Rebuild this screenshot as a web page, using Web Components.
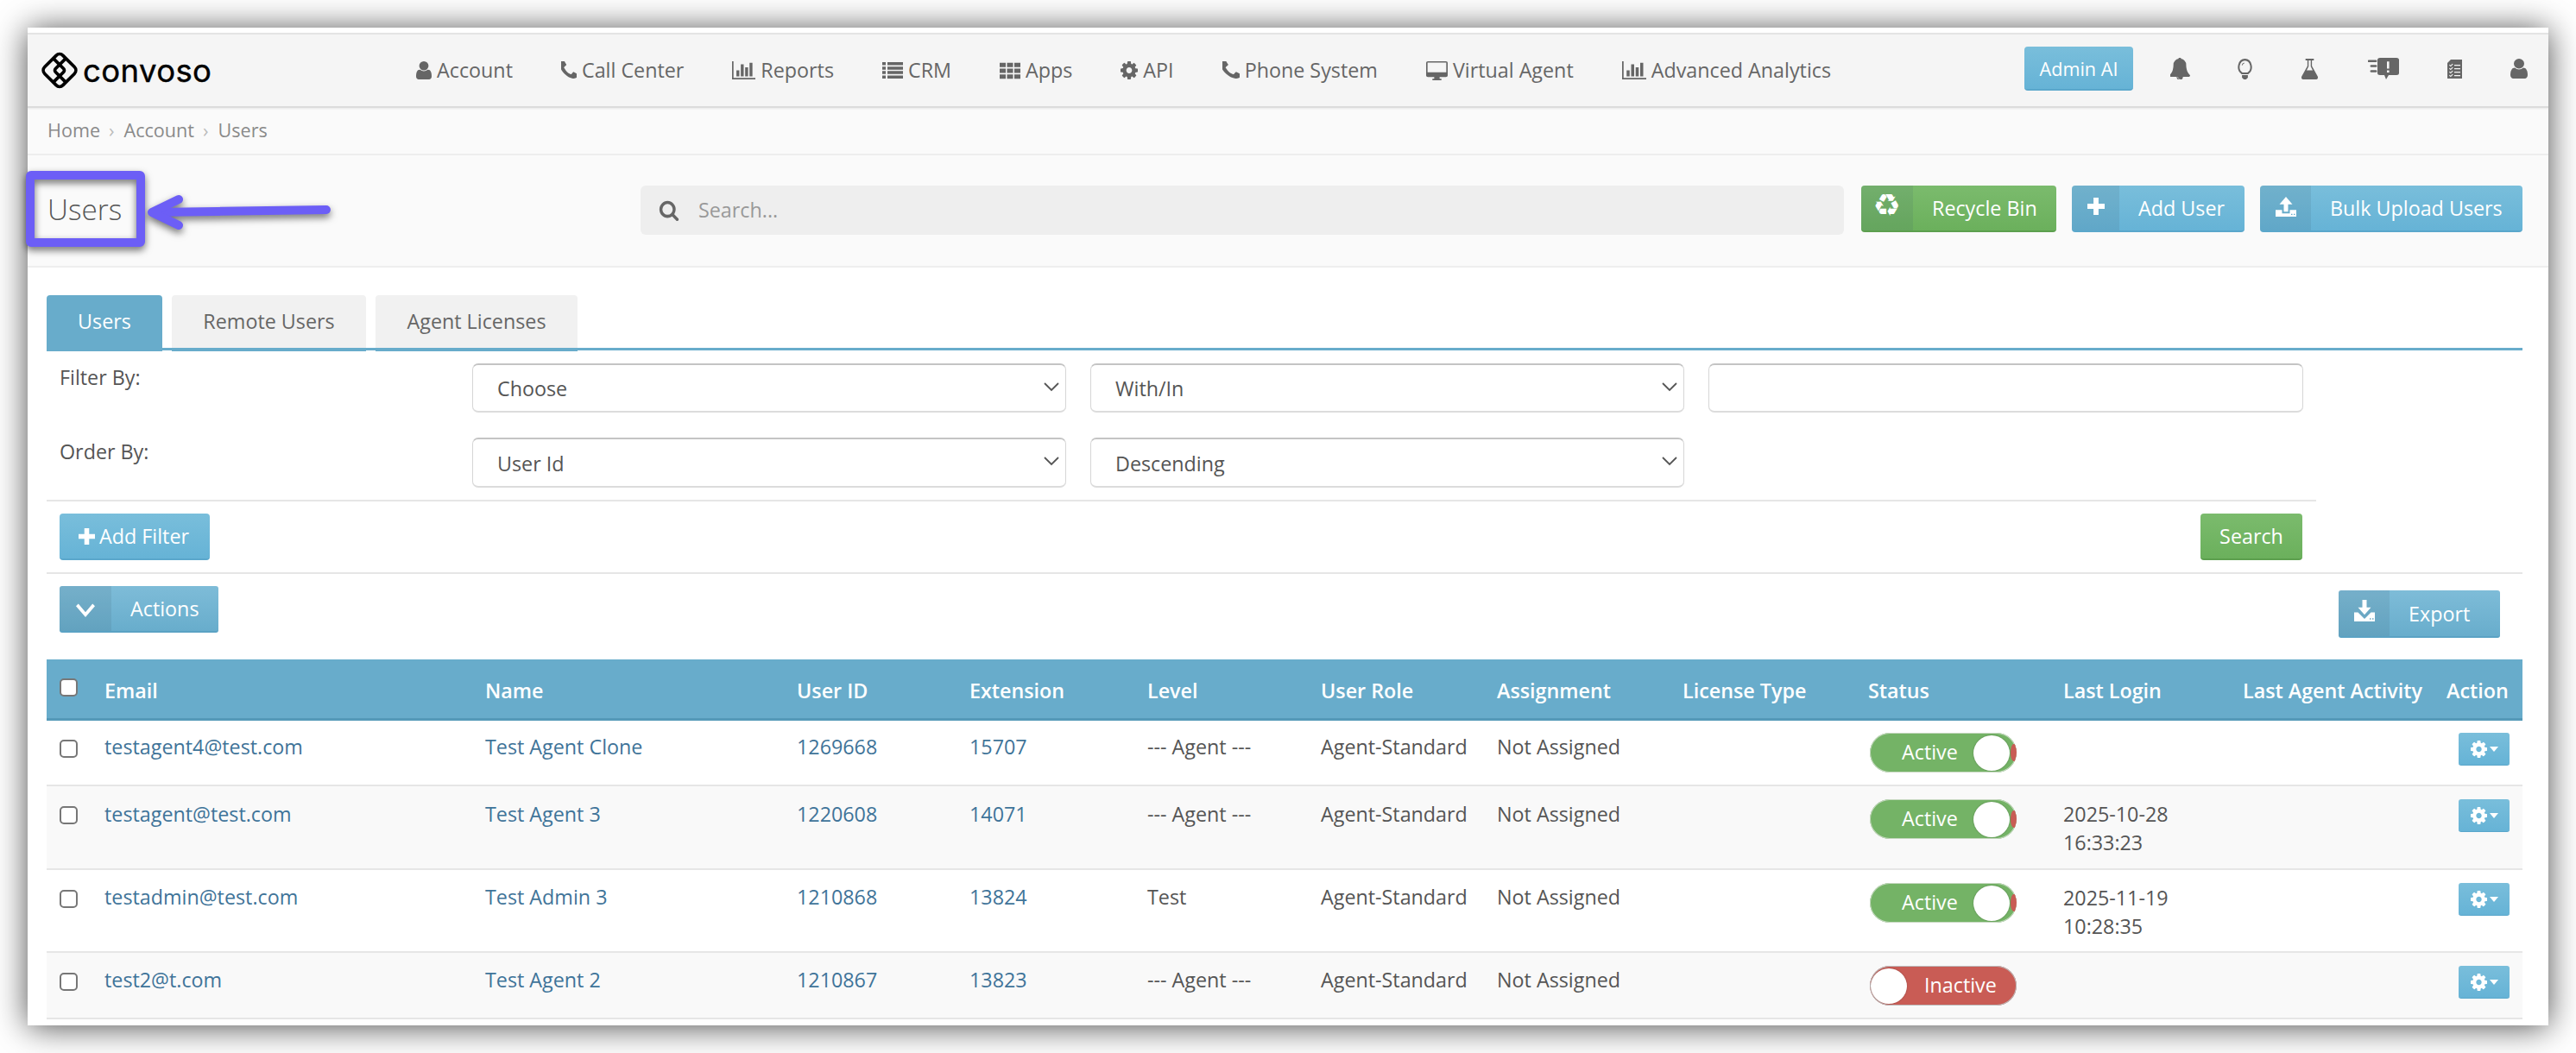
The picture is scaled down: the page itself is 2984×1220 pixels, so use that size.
<!DOCTYPE html>
<html>
<head>
<meta charset="utf-8">
<title>Users</title>
<style>
  html, body { margin: 0; height: 1220px; overflow: hidden; background: #fff; }
  body { font: 23.3px/33px "Open Sans", "Liberation Sans", sans-serif; color: #555; position: relative; }
</style>
</head>
<body>
<conv-window>
  <conv-navbar></conv-navbar>
  <conv-breadcrumb></conv-breadcrumb>
  <conv-page-header></conv-page-header>
  <conv-content>
    <conv-tabs></conv-tabs>
    <conv-filter></conv-filter>
    <conv-toolbar></conv-toolbar>
    <conv-user-table>
      <conv-user-row pad="14" ctl="0" h="76" email="testagent4@test.com" name="Test Agent Clone" uid="1269668" ext="15707" level="--- Agent ---"></conv-user-row>
      <conv-user-row pad="16" ctl="-1" h="97" alt email="testagent@test.com" name="Test Agent 3" uid="1220608" ext="14071" level="--- Agent ---" login="2025-10-28|16:33:23"></conv-user-row>
      <conv-user-row pad="15" ctl="0" h="96" email="testadmin@test.com" name="Test Admin 3" uid="1210868" ext="13824" level="Test" login="2025-11-19|10:28:35"></conv-user-row>
      <conv-user-row pad="15" ctl="0" h="77" alt inactive email="test2@t.com" name="Test Agent 2" uid="1210867" ext="13823" level="--- Agent ---"></conv-user-row>
    </conv-user-table>
  </conv-content>
</conv-window>
<conv-annotation></conv-annotation>

<script>
// iconos dibujados a mano o de la fuente original, todos con fill currentColor
const ICONS = {
  user: ['256 128 1280 1536', 'M1536 1399q0 109-62.5 187t-150.5 78h-854q-88 0-150.5-78t-62.5-187q0-85 8.5-160.5t31.5-152 58.5-131 94-89 134.5-34.5q131 128 313 128t313-128q76 0 134.5 34.5t94 89 58.5 131 31.5 152 8.5 160.5zm-256-887q0 159-112.5 271.5t-271.5 112.5-271.5-112.5-112.5-271.5 112.5-271.5 271.5-112.5 271.5 112.5 112.5 271.5z'],
  phone: ['300 200 1200 1400', 'M1600 1240q0 27-10 70.5t-21 68.5q-21 50-122 106-94 51-186 51-27 0-53-3.5t-57.5-12.5-47-14.5-55.5-20.5-49-18q-98-35-175-83-127-79-264-216t-216-264q-48-77-83-175-3-9-18-49t-20.5-55.5-14.5-47-12.5-57.5-3.5-53q0-92 51-186 56-101 106-122 25-11 68.5-21t70.5-10q14 0 21 3 18 6 53 76 11 19 30 54t35 63.5 31 53.5q3 4 17.5 25t21.5 35.5 7 28.5q0 20-28.5 50t-62 55-62 53-28.5 46q0 9 5 22.5t8.5 20.5 14 24 11.5 19q76 137 174 235t235 174q2 1 19 11.5t24 14 20.5 8.5 22.5 5q18 0 46-28.5t53-62 55-62 50-28.5q14 0 28.5 7t35.5 21.5 25 17.5q25 15 53.5 31t63.5 35 54 30q70 35 76 53 3 7 3 21z'],
  chart: ['0 128 2048 1536', 'M640 896v512h-256v-512h256zm384-512v1024h-256v-1024h256zm1024 1152v128h-2048v-1536h128v1408h1920zm-640-896v768h-256v-768h256zm384-384v1152h-256v-1152h256z'],
  list: ['0 0 24 22', 'M0 0h4v4H0zM6 0h18v4H6zM0 6h4v4H0zM6 6h18v4H6zM0 12h4v4H0zM6 12h18v4H6zM0 18h4v4H0zM6 18h18v4H6z'],
  th: ['0 0 24 24', 'M0 1h7v6H0zM8.5 1h7v6h-7zM17 1h7v6h-7zM0 9h7v6H0zM8.5 9h7v6h-7zM17 9h7v6h-7zM0 17h7v6H0zM8.5 17h7v6h-7zM17 17h7v6h-7z'],
  cog: ['128 128 1536 1536', 'M1152 896q0-106-75-181t-181-75-181 75-75 181 75 181 181 75 181-75 75-181zm512-109v222q0 12-8 23t-20 13l-185 28q-19 54-39 91 35 50 107 138 10 12 10 25t-9 23q-27 37-99 108t-94 71q-12 0-26-9l-138-108q-44 23-91 38-16 136-29 186-7 28-36 28h-222q-14 0-24.5-8.5t-11.5-21.5l-28-184q-49-16-90-37l-141 107q-10 9-25 9-14 0-25-11-126-114-165-168-7-10-7-23 0-12 8-23 15-21 51-66.5t54-70.5q-27-50-41-99l-183-27q-13-2-21-12.5t-8-23.5v-222q0-12 8-23t19-13l186-28q14-46 39-92-40-57-107-138-10-12-10-24 0-10 9-23 26-36 98.5-107.5t94.5-71.5q13 0 26 10l138 107q44-23 91-38 16-136 29-186 7-28 36-28h222q14 0 24.5 8.5t11.5 21.5l28 184q49 16 90 37l142-107q9-9 24-9 13 0 25 10 129 119 165 170 7 8 7 22 0 12-8 23-15 21-51 66.5t-54 70.5q26 50 41 98l183 28q13 2 21 12.5t8 23.5z'],
  desktop: ['0 0 24 24', 'M2 0h20a2 2 0 0 1 2 2v16a2 2 0 0 1-2 2h-7v2h2v2H7v-2h2v-2H2a2 2 0 0 1-2-2V2a2 2 0 0 1 2-2zM1.6 1.6V14h20.8V1.6z'],
  bell: ['128 64 1600 1664', 'M912 1696q0-16-16-16-59 0-101.5-42.5t-42.5-101.5q0-16-16-16t-16 16q0 73 51.5 124.5t124.5 51.5q16 0 16-16zm816-288q0 52-38 90t-90 38h-448q0 106-75 181t-181 75-181-75-75-181h-448q-52 0-90-38t-38-90q50-42 91-88t85-119.5 74.5-158.5 50-206 19.5-260q0-152 117-282.5t307-158.5q-8-19-8-39 0-40 28-68t68-28 68 28 28 68q0 20-8 39 190 28 307 158.5t117 282.5q0 139 19.5 260t50 206 74.5 158.5 85 119.5 91 88z'],
  bulb: ['2 0 20 24', 'M12 0a9.5 9.5 0 0 1 5 17.6V18H7v-.4A9.5 9.5 0 0 1 12 0zM12 2.2a7.3 7.3 0 0 0-3.4 13.7h6.8A7.3 7.3 0 0 0 12 2.2zM8 19h8v3l-2.5 2h-3L8 22zM11 4.5c-1.5.3-3 1.5-3.4 3l1 .3c.4-1.1 1.4-2 2.6-2.3z'],
  flask: ['0 0 24 24', 'M6.5 0h11v2H15v6.5l7.6 12c.9 1.6 0 3.5-2 3.5H3.400c-2 0-2.900-1.900-2-3.500l7.600-12V2H6.500zM10.600 2v7L8 13.600h8L13.400 9V2z'],
  alert: ['0 0 36 30', 'M1 3h8a1.500 1.500 0 0 1 0 3H1a1.500 1.500 0 0 1 0-3zM4 10h5a1.500 1.500 0 0 1 0 3H4a1.500 1.500 0 0 1 0-3zM4 17h5a1.500 1.500 0 0 1 0 3H4a1.500 1.500 0 0 1 0-3zM14 0h19a3 3 0 0 1 3 3v18a3 3 0 0 1-3 3H24l-3 6-2-6h-5a3 3 0 0 1-3-3V3a3 3 0 0 1 3-3zM22 5v10h2.600V5zM22 17.500V20.500h2.600V17.500z'],
  clipboard: ['0 0 17 22', 'M4 0h13v22H0V4zM8 6v1.200h7V6zM8 10v1.200h7V10zM8 14v1.200h7V14zM8 18v1.200h7V18zM2 6.500l.8-.8 1 1 2-2 .8.8-2.800 2.800zM2 10.500l.8-.8 1 1 2-2 .8.8-2.800 2.800zM2 14.500l.8-.8 1 1 2-2 .8.8-2.800 2.800zM2 18.500l.8-.8 1 1 2-2 .8.8-2.800 2.800z'],
  search: ['0 0 1792 1792', 'M1216 832q0-185-131.500-316.500t-316.500-131.500-316.500 131.500-131.500 316.500 131.500 316.500 316.500 131.500 316.500-131.500 131.500-316.500zm512 832q0 52-38 90t-90 38q-54 0-90-38l-343-342q-179 124-399 124-143 0-273.500-55.500t-225-150-150-225-55.500-273.500 55.500-273.500 150-225 225-150 273.500-55.500 273.500 55.500 225 150 150 225 55.500 273.500q0 220-124 399l343 343q37 37 37 90z'],
  plus: ['0 0 24 24', 'M8.500 0h7v8.500H24v7h-8.500V24h-7v-8.500H0v-7h8.500z'],
  upload: ['0 0 24 24', 'M12 0l7.500 9h-5v9h-5V9h-5zM0 16h7.500v4h9v-4H24v8H0zM18 20.500v1.500h1.500v-1.500zM21 20.500v1.500h1.500v-1.500z'],
  download: ['0 0 24 26', 'M9.500 0h5v9h5L12 18 4.500 9h5zM0 15h4.500L12 23l7.500-8H24v11H0zM18 22v1.600h1.500V22zM21 22v1.600h1.500V22z'],
  chevron: ['0 0 24 24', 'M3 6l-3 3 12 14L24 9l-3-3-9 10.500z'],
  caret: ['0 0 12 8', 'M0 0h12L6 8z']
};

function icon(name, w, h) {
  const [vb, d] = ICONS[name];
  return `<svg viewBox="${vb}" width="${w}" height="${h}" preserveAspectRatio="none" fill="currentColor" fill-rule="evenodd" style="display:block;flex:none"><path d="${d}"/></svg>`;
}

const BTN_BASE = `
  .btn { display:inline-flex; align-items:center; box-sizing:border-box; height:54px; color:#fff; border-radius:4px;
    border-bottom:2px solid #5aa7cb; background:linear-gradient(#79bedb,#66b3d6); overflow:hidden; font-size:23.3px; line-height:33px; white-space:nowrap; }
  .btn.green { background:linear-gradient(#7bbb6d,#6bb05c); border-bottom-color:#5c9f4e; }
  .pane { align-self:stretch; display:flex; align-items:center; justify-content:center; background:rgba(60,90,110,.13); flex:none; }
`;

class ConvWindow extends HTMLElement {
  constructor() {
    super();
    this.attachShadow({ mode: 'open' }).innerHTML = `
      <style>
        :host { display:block; box-sizing:border-box; width:2920px; height:1156px; margin:32px 0 0 32px; padding-top:6px;
          background:#fff; box-shadow:0 2px 36px rgba(0,0,0,.7); overflow:hidden; }
      </style><slot></slot>`;
  }
}

class ConvNavbar extends HTMLElement {
  constructor() {
    super();
    const items = [
      ['user', 18, 21, 'Account'], ['phone', 18, 21, 'Call Center'], ['chart', 27, 21, 'Reports'],
      ['list', 24, 19, 'CRM'], ['th', 24, 20, 'Apps'], ['cog', 20, 21, 'API'],
      ['phone', 20, 21, 'Phone System'], ['desktop', 25, 22, 'Virtual Agent'], ['chart', 28, 21, 'Advanced Analytics']
    ];
    this.attachShadow({ mode: 'open' }).innerHTML = `
      <style>
        :host { display:flex; align-items:center; box-sizing:border-box; height:87px; background:#f5f5f5; color:#666;
          border-top:2px solid #e4e4e4; border-bottom:2px solid #dcdcdc; box-shadow:0 1px 2px rgba(0,0,0,.08); position:relative; }
        .brand { display:flex; align-items:center; margin-left:15px; width:435px; flex:none; gap:5px; color:#000; }
        .brand span { font:400 36.500px/42px Inter, sans-serif; letter-spacing:.4px; -webkit-text-stroke:.4px #000; }
        nav { display:flex; gap:56px; }
        nav a { display:flex; align-items:center; gap:6px; white-space:nowrap; }
        .right { display:flex; align-items:center; position:absolute; left:2313px; top:14px; }
        ${BTN_BASE}
        .ai { width:126px; height:51px; justify-content:center; font-size:21.6px; padding-top:2px; }
        .tools { display:grid; grid-template-columns:repeat(6,auto); align-items:center; margin-left:0; }
        .tools div { display:flex; justify-content:center; }
      </style>
      <div class="brand">
        <svg width="44" height="43" viewBox="-23 -23 46 46" fill="none" stroke="#000" stroke-width="4">
          <g transform="rotate(45)">
            <rect x="-16" y="-16" width="32" height="32" rx="6"/>
            <path d="M-16 -5H2a3 3 0 0 1 3 3V16M16 5H-2a3 3 0 0 1-3-3V-16"/>
          </g>
        </svg>
        <span>convoso</span>
      </div>
      <nav>${items.map(i => `<a>${icon(i[0], i[1], i[2])}${i[3]}</a>`).join('')}</nav>
      <div class="right">
        <span class="btn ai">Admin AI</span>
        <div class="tools">
          <div style="width:109px">${icon('bell', 23, 25)}</div>
          <div style="width:41px">${icon('bulb', 17, 24)}</div>
          <div style="width:109px">${icon('flask', 21, 24)}</div>
          <div style="width:61px">${icon('alert', 36, 25)}</div>
          <div style="width:104px">${icon('clipboard', 17, 22)}</div>
          <div style="width:46px">${icon('user', 20, 23)}</div>
        </div>
      </div>`;
  }
}

class ConvBreadcrumb extends HTMLElement {
  constructor() {
    super();
    this.attachShadow({ mode: 'open' }).innerHTML = `
      <style>
        :host { display:flex; align-items:center; box-sizing:border-box; height:55px; padding:0 0 2px 23px; background:#fafafa;
          border-bottom:2px solid #eee; color:#8a8a8a; font-size:21.6px; }
        i { font-style:normal; margin:0 11px 0 10px; color:#bbb; }
      </style>
      Home<i>›</i>Account<i>›</i>Users`;
  }
}

class ConvPageHeader extends HTMLElement {
  constructor() {
    super();
    this.attachShadow({ mode: 'open' }).innerHTML = `
      <style>
        :host { display:flex; align-items:flex-start; box-sizing:border-box; height:130px; padding:35px 30px 0 22px; background:#fafafa;
          border-bottom:2px solid #eee; }
        h1 { margin:4px 0 0; padding-left:1px; box-sizing:border-box; width:688px; flex:none; font:300 33.300px/46px "Open Sans", sans-serif; color:#555; }
        .search { display:flex; align-items:center; box-sizing:border-box; width:1394px; height:57px; padding-left:21px; gap:22px; background:#eee; border-radius:6px; color:#666; flex:none; }
        input { border:0; outline:0; background:none; font:inherit; flex:1; padding:0; color:#555; }
        input::placeholder { color:#999; opacity:1; }
        .actions { display:flex; gap:18px; margin-left:20px; }
        .rec { font:36px/1 "DejaVu Sans", sans-serif; padding-bottom:6px; box-sizing:border-box; }
        ${BTN_BASE}
      </style>
      <h1>Users</h1>
      <div class="search">${icon('search', 24, 25)}<input placeholder="Search..."></div>
      <div class="actions">
        <span class="btn green" style="width:226px"><span class="pane rec" style="width:60px">&#9851;</span><span style="margin-left:22px">Recycle Bin</span></span>
        <span class="btn" style="width:200px"><span class="pane" style="width:55px;padding-bottom:4px;box-sizing:border-box">${icon('plus', 20, 20)}</span><span style="margin-left:22px">Add User</span></span>
        <span class="btn" style="width:304px"><span class="pane" style="width:59px;padding-bottom:4px;box-sizing:border-box">${icon('upload', 24, 23)}</span><span style="margin-left:22px">Bulk Upload Users</span></span>
      </div>`;
  }
}

class ConvContent extends HTMLElement {
  constructor() {
    super();
    this.attachShadow({ mode: 'open' }).innerHTML = `
      <style>:host { display:block; padding:32px 30px 0 22px; background:#fff; }</style><slot></slot>`;
  }
}

class ConvTabs extends HTMLElement {
  constructor() {
    super();
    this.attachShadow({ mode: 'open' }).innerHTML = `
      <style>
        :host { display:flex; gap:11px; border-bottom:3px solid #68accb; }
        a { display:flex; align-items:center; justify-content:center; box-sizing:border-box; height:65px; margin-bottom:-4px;
          border-radius:4px 4px 0 0; background:#f1f1f1; border-bottom:4px solid #68accb; color:#666; }
        a.on { background:#68accb; color:#fff; }
      </style>
      <a class="on" style="width:134px">Users</a>
      <a style="width:225px">Remote Users</a>
      <a style="width:234px">Agent Licenses</a>`;
  }
}

class ConvSelect extends HTMLElement {
  constructor() {
    super();
    this.attachShadow({ mode: 'open' }).innerHTML = `
      <style>
        :host { display:block; position:relative; height:57px; }
        select, input { display:block; box-sizing:border-box; width:100%; height:100%; margin:0; padding:2px 0 0 28px; appearance:none; -webkit-appearance:none;
          background:#fff; border:1px solid #d6d6d6; border-top:2px solid #c4c4c4; border-bottom:2px solid #dcdcdc; border-radius:7px; font:inherit; color:#555; outline:0; }
        svg { position:absolute; right:8px; top:21px; pointer-events:none; }
      </style>
      ${this.hasAttribute('blank') ? '<input>' :
        `<select><option>${this.getAttribute('value')}</option></select>
         <svg width="18" height="12" viewBox="0 0 18 12" fill="none" stroke="#555" stroke-width="1.800"><path d="M1 2l8 8 8-8"/></svg>`}`;
  }
}

class ConvFilter extends HTMLElement {
  constructor() {
    super();
    this.attachShadow({ mode: 'open' }).innerHTML = `
      <style>
        :host { display:block; width:2629px; }
        .grid { display:grid; grid-template-columns:450px 688px 688px 689px; column-gap:28px; row-gap:29px; box-sizing:border-box; padding:15px 0 14px 15px; border-bottom:2px solid #e6e6e6; }
        label { display:block; }
        .row { display:flex; justify-content:space-between; padding:14px 16px 0 15px; }
        ${BTN_BASE}
      </style>
      <div class="grid">
        <label>Filter By:</label>
        <conv-select value="Choose"></conv-select>
        <conv-select value="With/In"></conv-select>
        <conv-select blank></conv-select>
        <label>Order By:</label>
        <conv-select value="User Id" style="height:58px"></conv-select>
        <conv-select value="Descending" style="height:58px"></conv-select>
      </div>
      <div class="row">
        <span class="btn" style="width:174px;padding-left:22px;gap:5px">${icon('plus', 19, 19)}Add Filter</span>
        <span class="btn green" style="width:118px;justify-content:center">Search</span>
      </div>`;
  }
}

class ConvToolbar extends HTMLElement {
  constructor() {
    super();
    this.attachShadow({ mode: 'open' }).innerHTML = `
      <style>
        :host { display:flex; justify-content:space-between; align-items:flex-start; box-sizing:border-box; height:101px; margin-top:14px; padding:14px 26px 0 15px; border-top:2px solid #e6e6e6; }
        ${BTN_BASE}
        .flat { background:linear-gradient(#7ebcd8,#68adcc); border-radius:3px; border-bottom-color:#5aa2c4; }
        .export { margin-top:5px; height:55px; padding-top:2px; }
        .export .pane { margin-top:-2px; }
      </style>
      <span class="btn flat" style="width:184px"><span class="pane" style="width:60px">${icon('chevron', 22, 22)}</span><span style="margin-left:22px">Actions</span></span>
      <span class="btn flat export" style="width:187px"><span class="pane" style="width:59px;padding-bottom:6px;box-sizing:border-box">${icon('download', 24, 25)}</span><span style="margin-left:22px">Export</span></span>`;
  }
}

class ConvUserTable extends HTMLElement {
  constructor() {
    super();
    const heads = ['Email', 'Name', 'User ID', 'Extension', 'Level', 'User Role', 'Assignment', 'License Type', 'Status', 'Last Login', 'Last Agent Activity', 'Action'];
    this.attachShadow({ mode: 'open' }).innerHTML = `
      <style>
        :host { display:block; --cols:67px 441px 361px 200px 206px 201px 204px 215px 215px 226px 208px 236px 88px; }
        .head { display:grid; grid-template-columns:var(--cols); box-sizing:border-box; height:71px; padding-top:20px;
          background:#68accb; border-bottom:3px solid #5599b8; color:#fff; font-weight:600; white-space:nowrap; }
        input { appearance:none; -webkit-appearance:none; display:block; box-sizing:border-box; width:21px; height:21px; margin:2px 0 0 15px; background:#fff; border:2px solid #777; border-radius:5px; }
      </style>
      <div class="head"><div><input type="checkbox"></div>${heads.map(h => `<div>${h}</div>`).join('')}</div>
      <slot></slot>`;
  }
}

class ConvToggle extends HTMLElement {
  constructor() {
    super();
    const off = this.hasAttribute('off');
    this.attachShadow({ mode: 'open' }).innerHTML = `
      <style>
        :host { display:block; position:relative; box-sizing:border-box; width:170px; height:46px; border-radius:23px; overflow:hidden; color:#fff;
          background:${off ? '#c95c55' : '#74b366'}; box-shadow:inset 0 0 0 1px ${off ? '#bbb' : '#c6d8c0'}; }
        span { position:absolute; top:6px; left:${off ? '63px' : '37px'}; }
        .sliver { position:absolute; right:0; top:13px; width:7px; height:20px; background:#c95c55; border-radius:50% 0 0 50%; }
        .knob { position:absolute; top:3px; left:${off ? '1px' : '120px'}; width:42px; height:41px; border-radius:50%; background:#fff; box-shadow:0 0 2px rgba(0,0,0,.3); }
      </style>
      ${off ? '' : '<div class="sliver"></div>'}
      <span>${off ? 'Inactive' : 'Active'}</span><div class="knob"></div>`;
  }
}

class ConvUserRow extends HTMLElement {
  constructor() {
    super();
    const a = n => this.getAttribute(n) || '';
    const login = a('login').split('|').join('<br>');
    const ctl = Number(a('ctl'));
    this.attachShadow({ mode: 'open' }).innerHTML = `
      <style>
        :host { display:grid; grid-template-columns:var(--cols); box-sizing:border-box;
          height:${a('h')}px; padding-top:${a('pad')}px; border-bottom:2px solid #e6e6e6; background:${this.hasAttribute('alt') ? '#f9f9f9' : '#fff'}; white-space:nowrap; }
        a { color:#3f7499; }
        input { appearance:none; -webkit-appearance:none; display:block; box-sizing:border-box; width:21px; height:21px; margin:${8 + ctl}px 0 0 15px; background:#fff; border:2px solid #777; border-radius:5px; }
        conv-toggle { margin:${ctl}px 0 0 2px; }
        .login { margin-top:${ctl + 1}px; }
        .act { display:flex; align-items:center; justify-content:center; gap:3px; width:59px; height:38px; margin:${ctl}px 0 0 14px; border-radius:3px; color:#fff; background:linear-gradient(#79bedb,#66b3d6); border-bottom:1px solid #5aa7cb; box-sizing:border-box; }
      </style>
      <div><input type="checkbox"></div>
      <div><a>${a('email')}</a></div>
      <div><a>${a('name')}</a></div>
      <div><a>${a('uid')}</a></div>
      <div><a>${a('ext')}</a></div>
      <div>${a('level')}</div>
      <div>Agent-Standard</div>
      <div>Not Assigned</div>
      <div></div>
      <div><conv-toggle ${this.hasAttribute('inactive') ? 'off' : ''}></conv-toggle></div>
      <div class="login">${login}</div>
      <div></div>
      <div><span class="act">${icon('cog', 19, 20)}${icon('caret', 10, 6)}</span></div>`;
  }
}

// la anotacion morada va encima de la pagina, por eso es absolute
class ConvAnnotation extends HTMLElement {
  constructor() {
    super();
    this.attachShadow({ mode: 'open' }).innerHTML = `
      <style>
        :host { position:absolute; left:20px; top:190px; display:block; width:380px; height:110px; }
        svg { display:block; overflow:visible; filter:drop-shadow(0 4px 4px rgba(0,0,0,.55)); }
      </style>
      <svg width="380" height="110" viewBox="20 190 380 110" fill="none" stroke="#6c5ef6" stroke-width="10" stroke-linecap="round" stroke-linejoin="round">
        <rect x="35" y="203" width="128" height="78" rx="1"/>
        <path d="M178 246L378 243"/>
        <path d="M207 231L176 246L207 261"/>
      </svg>`;
  }
}

customElements.define('conv-window', ConvWindow);
customElements.define('conv-navbar', ConvNavbar);
customElements.define('conv-breadcrumb', ConvBreadcrumb);
customElements.define('conv-page-header', ConvPageHeader);
customElements.define('conv-content', ConvContent);
customElements.define('conv-tabs', ConvTabs);
customElements.define('conv-select', ConvSelect);
customElements.define('conv-filter', ConvFilter);
customElements.define('conv-toolbar', ConvToolbar);
customElements.define('conv-user-table', ConvUserTable);
customElements.define('conv-toggle', ConvToggle);
customElements.define('conv-user-row', ConvUserRow);
customElements.define('conv-annotation', ConvAnnotation);
</script>
</body>
</html>
